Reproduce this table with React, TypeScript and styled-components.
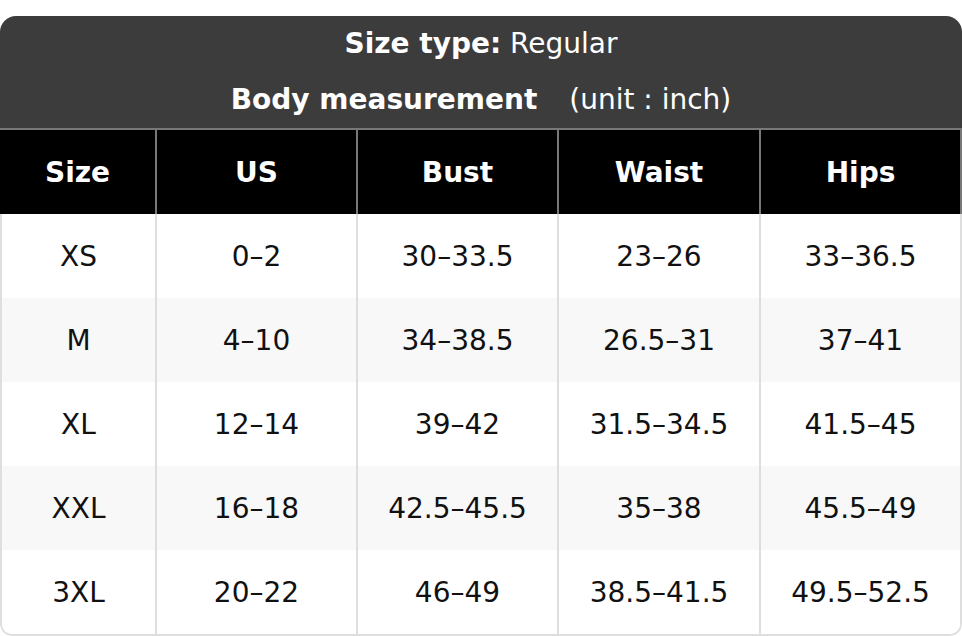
import React from "react";
import styled, { createGlobalStyle } from "styled-components";

const rows = [
  ["XS", "0–2", "30–33.5", "23–26", "33–36.5"],
  ["M", "4–10", "34–38.5", "26.5–31", "37–41"],
  ["XL", "12–14", "39–42", "31.5–34.5", "41.5–45"],
  ["XXL", "16–18", "42.5–45.5", "35–38", "45.5–49"],
  ["3XL", "20–22", "46–49", "38.5–41.5", "49.5–52.5"],
];

const columns = ["Size", "US", "Bust", "Waist", "Hips"];

const GlobalStyle = createGlobalStyle`
  html, body {
    margin: 0;
    padding: 0;
    background: #ffffff;
    font-family: "DejaVu Sans", "Liberation Sans", sans-serif;
  }
  * {
    box-sizing: border-box;
  }
`;

const Page = styled.div`
  padding-top: 16px;
  width: 962px;
`;

const Card = styled.section`
  border-radius: 16px 16px 12px 12px;
  overflow: hidden;
`;

const Title = styled.header`
  background: #3c3c3c;
  color: #ffffff;
  border-bottom: 2px solid #787878;
  text-align: center;
  font-size: 28px;
`;

const TitleLine = styled.div`
  height: 56px;
  line-height: 56px;

  & b {
    font-weight: 700;
  }
`;

const Unit = styled.span`
  padding-left: 32px;
`;

const HeadRow = styled.div`
  display: grid;
  grid-template-columns: 157px 201px 201px 202px 1fr;
  background: #000000;
`;

const HeadCell = styled.div`
  height: 84px;
  display: flex;
  align-items: center;
  justify-content: center;
  color: #ffffff;
  font-size: 28px;
  font-weight: 700;
  border-right: 2px solid #787878;
`;

const Body = styled.div`
  border: 2px solid #dedede;
  border-top: none;
  border-radius: 0 0 12px 12px;
  overflow: hidden;
`;

const Row = styled.div<{ $striped: boolean }>`
  display: grid;
  grid-template-columns: 155px 201px 201px 202px 1fr;
  background: ${({ $striped }) => ($striped ? "#f8f8f8" : "#ffffff")};
`;

const Cell = styled.div`
  height: 84px;
  display: flex;
  align-items: center;
  justify-content: center;
  color: #111111;
  font-size: 28px;
  border-right: 2px solid #dedede;

  &:last-child {
    border-right: none;
  }
`;

export default function App() {
  return (
    <Page>
      <GlobalStyle />
      <Card>
        <Title>
          <TitleLine>
            <b>Size type:</b> Regular
          </TitleLine>
          <TitleLine>
            <b>Body measurement</b>
            <Unit>(unit : inch)</Unit>
          </TitleLine>
        </Title>
        <HeadRow>
          {columns.map((c) => (
            <HeadCell key={c}>{c}</HeadCell>
          ))}
        </HeadRow>
        <Body>
          {rows.map((r, i) => (
            <Row key={r[0]} $striped={i % 2 === 1}>
              {r.map((v, j) => (
                <Cell key={j}>{v}</Cell>
              ))}
            </Row>
          ))}
        </Body>
      </Card>
    </Page>
  );
}
